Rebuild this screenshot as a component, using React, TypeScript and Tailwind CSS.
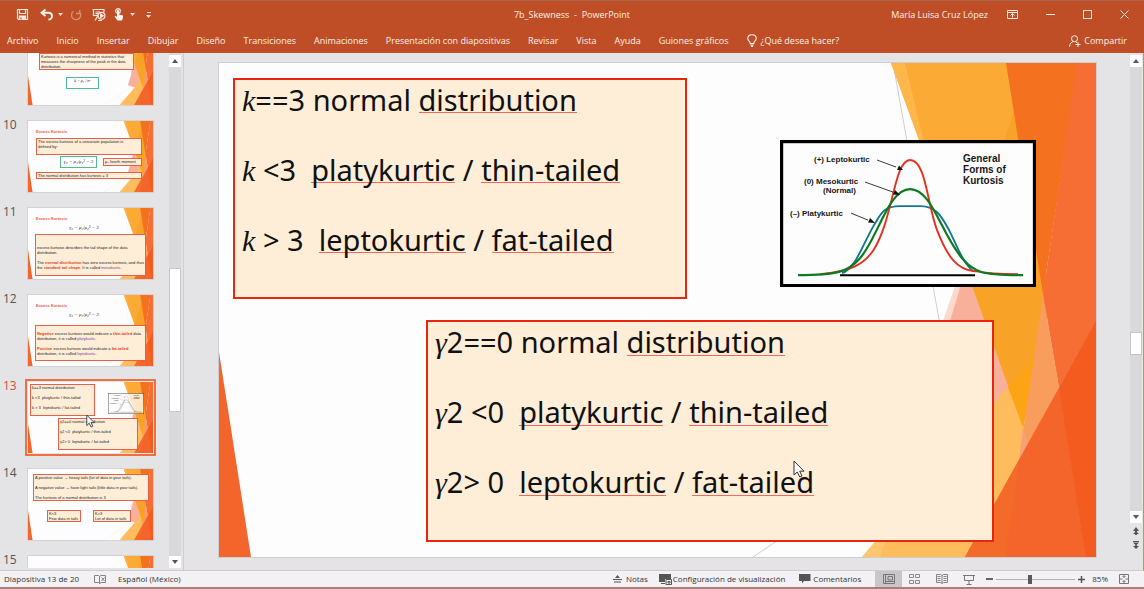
import React from "react";
import type { ReactNode } from "react";

const MENU = [
  "Archivo",
  "Inicio",
  "Insertar",
  "Dibujar",
  "Diseño",
  "Transiciones",
  "Animaciones",
  "Presentación con diapositivas",
  "Revisar",
  "Vista",
  "Ayuda",
  "Guiones gráficos",
];

function Backdrop() {
  return (
    <svg
      className="absolute inset-0 h-full w-full"
      viewBox="219 63 877 494"
      preserveAspectRatio="none"
      aria-hidden="true"
    >
      <rect x="219" y="63" width="877" height="494" fill="#fefdfe" />
      <path d="M893 63L940 325M753 557L1000 392" stroke="#cfcdd0" strokeWidth="1" fill="none" />
      <path d="M1000 200L957 280L940 330L1010 420L1040 300Z" fill="#fbd9cf" />
      <path d="M966 268L920 420L990 440L1023 427Z" fill="#f9b09a" />
      <path d="M862 557L1040 350L1060 400L1000 557Z" fill="#ffbc5c" />
      <path d="M862 557L900 513L890 530L880 557Z" fill="#ffc56f" />
      <path d="M891 63H1010L1050 300L1023 427Z" fill="#fbaa35" />
      <path d="M891 63H905L930 168Z" fill="#ffb64a" />
      <path d="M1014 110L966 268L1023 427L1050 300Z" fill="#f8a228" />
      <path d="M1008 387L1036 356L1023 427Z" fill="#fda414" />
      <path d="M1043 294L1059 388L1019 461Z" fill="#f99d5d" />
      <path d="M1023 427L1019 461L1028 444Z" fill="#f8a177" />
      <path d="M1006 63H1078L1043 294Z" fill="#f47120" />
      <path d="M1077 63H1096V322L1059 388L1043 294Z" fill="#f66e34" />
      <path d="M1096 321V557H965Z" fill="#f4652b" />
      <path d="M1019 460L1005 557H965Z" fill="#f46b29" />
      <path d="M1096 321V557H1086L1059 388Z" fill="#f45b1e" />
      <path d="M219 352L251 557H219Z" fill="#f4652b" />
    </svg>
  );
}

function Chart() {
  return (
    <svg
      className="block h-full w-full"
      viewBox="780 140 256 147"
      preserveAspectRatio="none"
      role="img"
      aria-label="General Forms of Kurtosis"
    >
      <rect x="781.5" y="141.5" width="253" height="144" fill="#fefdfe" stroke="#000" strokeWidth="3.4" />
      <path d="M840 275H975" stroke="#000" strokeWidth="2" />
      <g fill="none" strokeWidth="1.9">
        <path
          stroke="#12788c"
          d="M842 273C856 268 862 245 874 225C881 213 884 206 900 206H920C936 206 941 216 948 228C956 243 962 262 973 271"
        />
        <path
          stroke="#e6301f"
          d="M820 274C850 271 864 265 874 249C893 219 894 160 910 160C926 160 927 204 937 230C947 256 957 270 975 271C990 274 1005 274 1018 274"
        />
        <path
          stroke="#0d7a22"
          strokeWidth="2.200"
          d="M798 275C836 275 848 272 860 258C878 238 888 189 910 189C932 189 941 234 962 258C975 272 980 275 1023 275"
        />
      </g>
      <path d="M877 160L896 167M865 182L893 192M851 213L868 220" stroke="#222" strokeWidth="0.9" />
      <path d="M903 170L897 170L899 165.500ZM900 195L893 194.500L895 190ZM875 223L868 222.500L870 218Z" fill="#111" />
      <g fontFamily='"Liberation Sans", Arial, sans-serif' fontWeight="700" fill="#161616">
        <g fontSize="8">
          <text x="814" y="162">(+)  Leptokurtic</text>
          <text x="804" y="184">(0)  Mesokurtic</text>
          <text x="823" y="193">(Normal)</text>
          <text x="790" y="216">(–)  Platykurtic</text>
        </g>
        <g fontSize="10">
          <text x="963" y="162">General</text>
          <text x="963" y="173">Forms of</text>
          <text x="963" y="184">Kurtosis</text>
        </g>
      </g>
    </svg>
  );
}

function Cursor() {
  return (
    <svg className="block h-[18px] w-[12px]" viewBox="0 0 12 18" aria-hidden="true">
      <path d="M1 1V15L4.300 12L6.800 17L9 16L6.700 11.200H11Z" fill="#fff" stroke="#333" strokeWidth="1" />
    </svg>
  );
}

function Miss({ children }: { children: ReactNode }) {
  return (
    <span className="bg-[linear-gradient(#f26a5c,#f26a5c)] bg-[length:100%_1px] bg-[position:0_86%] bg-no-repeat">
      {children}
    </span>
  );
}

function Sym({ children }: { children: ReactNode }) {
  return <i className="font-['Liberation_Serif',serif] text-[30px] leading-[0px]">{children}</i>;
}

function SlideBox({ symbol, lines, className }: { symbol: string; lines: string[]; className: string }) {
  return (
    <div
      className={
        "absolute flex flex-col gap-[30px] border-2 border-[#e8250f] bg-[#feeed8] pl-[7px] text-[29px] leading-[40px] whitespace-pre text-[#111] " +
        className
      }
    >
      <p>
        <Sym>{symbol}</Sym>
        {lines[0]} normal <Miss>distribution</Miss>
      </p>
      <p>
        <Sym>{symbol}</Sym>
        {lines[1]}
        {"  "}
        <Miss>platykurtic</Miss> / <Miss>thin-tailed</Miss>
      </p>
      <p>
        <Sym>{symbol}</Sym>
        {lines[2]}
        {"  "}
        <Miss>leptokurtic</Miss> / <Miss>fat-tailed</Miss>
      </p>
    </div>
  );
}

function Thumb({ n, children, selected }: { n?: number; children?: ReactNode; selected?: boolean }) {
  return (
    <button className="flex h-[87px] w-full shrink-0 items-start text-left">
      <span
        className={
          "w-[25px] pl-[3px] text-[12px] leading-[8px] " + (selected ? "text-[#d0503a]" : "text-[#555]")
        }
      >
        {n}
      </span>
      <span
        className={
          "relative ml-[3px] block h-[71px] w-[125px] overflow-hidden bg-white font-['Liberation_Sans',sans-serif] text-[4px] leading-[5px] text-[#222] " +
          (selected ? "outline-2 outline-offset-1 outline-[#f2703f]" : "outline-1 outline-[#d4d2d4]")
        }
      >
        <Backdrop />
        {children}
      </span>
    </button>
  );
}

function Note({ className, children }: { className: string; children?: ReactNode }) {
  return (
    <span className={"absolute block overflow-hidden border border-[#e8604a] bg-[#feeed8] px-px " + className}>
      {children}
    </span>
  );
}

function Title() {
  return <b className="absolute top-[8px] left-[8px] text-[#ee5a3c]">Excess Kurtosis</b>;
}

function Formula({ className }: { className: string }) {
  return (
    <span className={"absolute block text-center font-['Liberation_Serif',serif] text-[5px] italic " + className}>
      γ₂ = μ₄/μ₂² − 3
    </span>
  );
}

function MiniLines({ symbol, lines }: { symbol: string; lines: string[] }) {
  return (
    <span className="flex flex-col gap-[5px] whitespace-pre">
      <span>{symbol + lines[0]} normal distribution</span>
      <span>{symbol + lines[1]}  platykurtic / thin-tailed</span>
      <span>{symbol + lines[2]}  leptokurtic / fat-tailed</span>
    </span>
  );
}

const K_LINES = ["==3", " <3", " > 3"];
const G_LINES = ["2==0", "2 <0", "2> 0"];

function Arrow({ down, label }: { down?: boolean; label: string }) {
  return (
    <button aria-label={label} className="flex h-[12px] w-full shrink-0 items-center justify-center bg-white">
      <svg className="h-[4px] w-[6px]" viewBox="0 0 6 4" aria-hidden="true">
        <path d={down ? "M0 0H6L3 4Z" : "M0 4H6L3 0Z"} fill="#555" />
      </svg>
    </button>
  );
}

function IconButton({ label, className, children }: { label: string; className?: string; children: ReactNode }) {
  return (
    <button aria-label={label} className={"flex items-center justify-center " + (className ?? "")}>
      {children}
    </button>
  );
}

function Caret() {
  return (
    <svg className="h-[3px] w-[5px]" viewBox="0 0 5 3" aria-hidden="true">
      <path d="M0 0H5L2.500 3Z" fill="#f8ddd2" />
    </svg>
  );
}

function TitleBar() {
  return (
    <div className="grid h-[27px] grid-cols-[1fr_auto_1fr] items-center text-[9px]">
      <div className="flex items-center pl-[16px]">
        <IconButton label="Guardar">
          <svg className="size-[13px]" viewBox="0 0 13 13" fill="none" stroke="#fbe9e1" strokeWidth="1.2" aria-hidden="true">
            <path d="M1.500 1.500H11.500V11.500H2.500L1.500 10.500ZM3.500 1.500V5.500H9.500V1.500" />
            <path d="M3.500 8H9.500V11.500H3.500Z" fill="#fbe9e1" />
            <path d="M5 9.500V11.500" stroke="#bf4e26" />
          </svg>
        </IconButton>
        <IconButton label="Deshacer" className="ml-[11px] gap-[5px]">
          <svg className="h-[13px] w-[13px]" viewBox="0 0 13 13" fill="none" stroke="#fff4ee" strokeWidth="1.900" aria-hidden="true">
            <path d="M5.500 1.500L1.500 4.700L5.500 8M2 4.700H8.500C11 4.700 12 6.300 12 8C12 10 10.500 11.500 8.500 11.500" />
          </svg>
          <Caret />
        </IconButton>
        <IconButton label="Rehacer" className="ml-[7px]">
          <svg className="size-[12px]" viewBox="0 0 12 12" fill="none" stroke="#d98f73" strokeWidth="1.300" aria-hidden="true">
            <path d="M3.500 2.300A4.600 4.600 0 1 0 9 2.500M6 4.500H9.800V0.800" />
          </svg>
        </IconButton>
        <IconButton label="Presentación desde el principio" className="ml-[10px]">
          <svg className="size-[14px]" viewBox="0 0 14 14" fill="none" stroke="#fbe9e1" strokeWidth="1.200" aria-hidden="true">
            <path d="M0.500 1.500H12.500M1.500 1.500V7.500H6M12 1.500V4M3.500 4H8M3.500 5.700H6M6 7.500L3 12.500M6 12.500H10" />
            <circle cx="9.500" cy="7.700" r="3.400" />
            <path d="M8.700 6L11.200 7.700L8.700 9.400Z" fill="#fbe9e1" />
          </svg>
        </IconButton>
        <IconButton label="Modo mouse o táctil" className="ml-[8px] gap-[6px]">
          <svg className="h-[13px] w-[10px]" viewBox="0 0 10 13" aria-hidden="true">
            <circle cx="4" cy="3" r="2.300" fill="none" stroke="#fbe9e1" strokeWidth="1.200" />
            <path d="M3 2.500C3 1.500 5 1.500 5 2.500V6.500L9 7.500V9.500L8 12.500H3.500L0.500 8.500C1 7.500 2 7.800 3 8.800Z" fill="#fff4ee" />
          </svg>
          <Caret />
        </IconButton>
        <IconButton label="Personalizar barra de acceso rápido" className="ml-[11px] flex-col gap-[2px]">
          <span className="block h-px w-[4px] bg-[#f8ddd2]" />
          <Caret />
        </IconButton>
      </div>
      <h1 className="whitespace-pre">7b_Skewness  -  PowerPoint</h1>
      <div className="flex items-center justify-end pr-[15px]">
        <span className="mr-[19px]">María Luisa Cruz López</span>
        <IconButton label="Opciones de la cinta" className="mr-[28px]">
          <svg className="h-[9px] w-[11px]" viewBox="0 0 11 9" fill="none" stroke="#fbe9e1" aria-hidden="true">
            <path d="M0.500 0.500H10.500V8.500H0.500ZM0.500 2.500H10.500M5.500 7.500V4M3.500 5.500L5.500 3.500L7.500 5.500" />
          </svg>
        </IconButton>
        <IconButton label="Minimizar" className="mr-[28px]">
          <span className="block h-px w-[9px] bg-[#fbe9e1]" />
        </IconButton>
        <IconButton label="Maximizar" className="mr-[28px]">
          <span className="block size-[9px] border border-[#fbe9e1]" />
        </IconButton>
        <IconButton label="Cerrar">
          <svg className="size-[9px]" viewBox="0 0 9 9" stroke="#fbe9e1" aria-hidden="true">
            <path d="M0.500 0.500L8.500 8.500M8.500 0.500L0.500 8.500" />
          </svg>
        </IconButton>
      </div>
    </div>
  );
}

function Ribbon() {
  return (
    <nav className="flex h-[25px] items-center gap-[18px] pr-[17px] pl-[7px] text-[9px] whitespace-nowrap">
      {MENU.map((m) => (
        <button key={m}>{m}</button>
      ))}
      <button className="flex items-center gap-[4px]">
        <svg className="h-[13px] w-[10px]" viewBox="0 0 10 13" fill="none" stroke="#fff4ee" strokeWidth="1.100" aria-hidden="true">
          <path d="M3.200 9.500C3.200 7.500 0.800 6.800 0.800 4.400C0.800 2.200 2.700 0.700 5 0.700S9.200 2.200 9.200 4.400C9.200 6.800 6.800 7.500 6.800 9.500ZM3.200 11H6.800M4 12.400H6" />
        </svg>
        ¿Qué desea hacer?
      </button>
      <button className="ml-auto flex items-center gap-[3px]">
        <svg className="h-[12px] w-[12px]" viewBox="0 0 12 12" fill="none" stroke="#fff4ee" aria-hidden="true">
          <circle cx="5.500" cy="3.700" r="3" />
          <path d="M0.500 11.500C0.800 8.500 2.500 7 4.500 6.600M6.500 6.600L8 7.800M6.500 9.500H11.500M9 7V12" />
        </svg>
        Compartir
      </button>
    </nav>
  );
}

function Thumbnails() {
  return (
    <aside className="flex w-[184px] shrink-0 border-r border-[#cfcdcf] pb-[2px]">
      <div className="flex min-w-0 flex-1 flex-col overflow-hidden">
        <div className="flex h-[68px] shrink-0 flex-col justify-end overflow-hidden">
          <Thumb>
            <Note className="top-[19px] left-[11px] h-[17px] w-[95px]">
              Kurtosis is a numerical method in statistics that measures the sharpness of the peak in the data
              distribution.
            </Note>
            <span className="absolute top-[43px] left-[38px] block h-[12px] w-[33px] border border-[#4dbb96] bg-white text-center font-['Liberation_Serif',serif] italic">
              k = μ₄ / σ⁴
            </span>
          </Thumb>
        </div>
        <Thumb n={10}>
          <Title />
          <Note className="top-[17px] left-[8px] h-[17px] w-[106px]">
            The excess kurtosis of a univariate population is
            <br />
            defined by:
          </Note>
          <Formula className="top-[35px] left-[32px] h-[12px] w-[37px] border border-[#4dbb96] bg-white leading-[10px]" />
          <Note className="top-[37px] left-[75px] h-[8px] w-[39px] whitespace-nowrap">μ₄ fourth moment</Note>
          <Note className="top-[51px] left-[8px] h-[7px] w-[106px]">The normal distribution has kurtosis = 3</Note>
        </Thumb>
        <Thumb n={11}>
          <Title />
          <Formula className="top-[17px] left-[38px] w-[36px]" />
          <Note className="top-[26px] left-[7px] h-[42px] w-[111px] pt-[10px]">
            excess kurtosis describes the tail shape of the data
            <br />
            distribution.
            <br />
            <br />
            The <b className="text-[#e63b20]">normal distribution</b> has zero excess kurtosis, and thus
            <br />
            the <b className="text-[#e63b20]">standard tail shape</b>. It is called{" "}
            <span className="text-[#7040a0]">mesokurtic</span>.
          </Note>
        </Thumb>
        <Thumb n={12}>
          <Title />
          <Formula className="top-[17px] left-[38px] w-[36px]" />
          <Note className="top-[30px] left-[7px] h-[36px] w-[111px] pt-[5px]">
            <b className="text-[#e63b20]">Negative</b> excess kurtosis would indicate a{" "}
            <b className="text-[#e63b20]">thin-tailed</b> data
            <br />
            distribution, it is called <span className="text-[#7040a0]">platykurtic</span>.
            <br />
            <br />
            <b className="text-[#e63b20]">Positive</b> excess kurtosis would indicate a{" "}
            <b className="text-[#e63b20]">fat-tailed</b>
            <br />
            distribution, it is called <span className="text-[#7040a0]">leptokurtic</span>.
          </Note>
        </Thumb>
        <Thumb n={13} selected>
          <Note className="top-[2px] left-[2px] h-[32px] w-[65px]">
            <MiniLines symbol="k" lines={K_LINES} />
          </Note>
          <span className="absolute top-[11px] left-[80px] block h-[21px] w-[36px] opacity-75">
            <Chart />
          </span>
          <Note className="top-[36px] left-[30px] h-[32px] w-[80px]">
            <MiniLines symbol="γ" lines={G_LINES} />
          </Note>
          <span className="absolute top-[32px] left-[58px] block h-[14px] w-[9px]">
            <svg className="block h-full w-full" viewBox="0 0 12 18" aria-hidden="true">
              <path d="M1 1V15L4.300 12L6.800 17L9 16L6.700 11.200H11Z" fill="#fff" stroke="#333" strokeWidth="1.200" />
            </svg>
          </span>
        </Thumb>
        <Thumb n={14}>
          <Note className="top-[5px] left-[5px] h-[27px] w-[116px] whitespace-nowrap">
            <span className="flex flex-col gap-[5px]">
              <span>A positive value → heavy tails (lot of data in your tails).</span>
              <span>A negative value → have light tails (little data in your tails).</span>
              <span>The kurtosis of a normal distribution is 3</span>
            </span>
          </Note>
          <Note className="top-[41px] left-[19px] h-[12px] w-[34px]">
            K&lt;3
            <br />
            Few data in tails
          </Note>
          <Note className="top-[41px] left-[65px] h-[12px] w-[38px]">
            K&gt;3
            <br />
            Lot of data in tails
          </Note>
        </Thumb>
        <Thumb n={15} />
      </div>
      <div className="mr-[2px] flex w-[12px] shrink-0 flex-col bg-[#d9d8da] pt-[2px]">
        <Arrow label="Subir" />
        <div className="flex-[202]" />
        <div className="flex-[143] border border-[#c6c4c6] bg-white" />
        <div className="flex-[145]" />
        <Arrow down label="Bajar" />
      </div>
    </aside>
  );
}

function Workspace() {
  return (
    <main className="flex min-w-0 flex-1">
      <div className="flex min-w-0 flex-1 pt-[10px] pr-[34px] pb-[13px] pl-[35px]">
        <section className="relative flex-1 overflow-hidden font-['Noto_Sans',sans-serif] outline-1 outline-[#cfcdcf]">
          <Backdrop />
          <SlideBox symbol="k" lines={K_LINES} className="top-[3%] left-[1.6%] h-[44.8%] w-[51.8%]" />
          <div className="absolute top-[15.6%] left-[64%] h-[29.8%] w-[29.2%]">
            <Chart />
          </div>
          <SlideBox symbol="γ" lines={G_LINES} className="top-[52%] left-[23.6%] h-[45%] w-[64.8%]" />
          <div className="absolute top-[80.4%] left-[65.4%]">
            <Cursor />
          </div>
        </section>
      </div>
      <div className="mr-px flex w-[12px] shrink-0 flex-col pt-[2px] pb-[21px]">
        <Arrow label="Desplazar arriba" />
        <div className="flex-[267] bg-[#d9d8da]" />
        <div className="flex-[21] border border-[#c6c4c6] bg-white" />
        <div className="flex-[157] bg-[#d9d8da]" />
        <Arrow down label="Desplazar abajo" />
        <div className="flex flex-col items-center gap-[6px] pt-[4px]">
          <button aria-label="Diapositiva anterior">
            <svg className="block h-[8px] w-[6px]" viewBox="0 0 6 8" fill="#555" aria-hidden="true">
              <path d="M0 4L3 0L6 4ZM2 3H4V5H2ZM0 7L3 4L6 7ZM2 6H4V8H2Z" />
            </svg>
          </button>
          <button aria-label="Diapositiva siguiente">
            <svg className="block h-[8px] w-[6px]" viewBox="0 0 6 8" fill="#555" aria-hidden="true">
              <path d="M0 0H6V1H0ZM0 1.500L3 4.500L6 1.500ZM2 4H4V5H2ZM0 5L3 8L6 5Z" />
            </svg>
          </button>
        </div>
      </div>
    </main>
  );
}

function StatusBar() {
  return (
    <footer className="flex h-[18px] shrink-0 items-center border-b-2 border-b-[#a98078] bg-[#f3f1f3] pl-[4px] text-[8px] whitespace-nowrap text-[#333]">
      <span>Diapositiva 13 de 20</span>
      <svg className="ml-[15px] h-[9px] w-[12px]" viewBox="0 0 12 9" fill="none" stroke="#777" strokeWidth="0.900" aria-hidden="true">
        <path d="M5.500 1.500L4.500 0.500H0.500V7.500H4.500L5.500 8.500V1.500L7 0.500H11.500V7.500H7L5.500 8.500M7.500 2.500L10.500 6M10.500 2.500L7.500 6" />
      </svg>
      <button className="ml-[12px]">Español (México)</button>
      <div className="ml-auto flex h-full items-center">
        <button className="flex items-center gap-[4px]">
          <svg className="h-[8px] w-[9px]" viewBox="0 0 9 8" fill="#555" aria-hidden="true">
            <path d="M2 3L4.500 0L7 3ZM0 4H9V5H0ZM1 6.500H8V7.500H1Z" />
          </svg>
          Notas
        </button>
        <button className="ml-[11px] flex items-center gap-[1px]">
          <svg className="h-[11px] w-[13px]" viewBox="0 0 13 11" aria-hidden="true">
            <path d="M0 0H12V5H6V8H0ZM2 9H6V10H2Z" fill="#555" />
            <path d="M7 5.500H12.500V10.500H7ZM9 7.500H11V9H9Z" fill="none" stroke="#555" />
          </svg>
          Configuración de visualización
        </button>
        <button className="ml-[14px] flex items-center gap-[2px]">
          <svg className="h-[10px] w-[12px]" viewBox="0 0 12 10" aria-hidden="true">
            <path d="M0 0H11.500V7H5L3 9.500V7H0Z" fill="#555" />
          </svg>
          Comentarios
        </button>
        <IconButton label="Normal" className="ml-[14px] h-full w-[27px] bg-[#c8c6c8]">
          <svg className="h-[10px] w-[12px]" viewBox="0 0 12 10" fill="none" stroke="#777" aria-hidden="true">
            <path d="M0.500 0.500H11.500V9.500H0.500ZM2.500 0.500V9.500M5 2.500H9.500V6H5ZM3 7.500H11" />
          </svg>
        </IconButton>
        <IconButton label="Clasificador de diapositivas" className="ml-[7px]">
          <svg className="h-[10px] w-[11px]" viewBox="0 0 11 10" fill="none" stroke="#888" aria-hidden="true">
            <path d="M0.500 0.500H4.500V3.500H0.500ZM6.500 0.500H10.500V3.500H6.500ZM0.500 6.500H4.500V9.500H0.500ZM6.500 6.500H10.500V9.500H6.500Z" />
          </svg>
        </IconButton>
        <IconButton label="Vista de lectura" className="ml-[16px]">
          <svg className="h-[10px] w-[12px]" viewBox="0 0 12 10" fill="none" stroke="#777" strokeWidth="0.900" aria-hidden="true">
            <path d="M6 1.500L4.500 0.500H0.500V8.500H4.500L6 9.500L7.500 8.500H11.500V0.500H7.500L6 1.500V9.500M1.500 2.500H4.500M1.500 4.500H4.500M1.500 6.500H4.500M7.500 2.500H10.500M7.500 4.500H10.500M7.500 6.500H10.500" />
          </svg>
        </IconButton>
        <IconButton label="Presentación" className="ml-[15px]">
          <svg className="h-[11px] w-[12px]" viewBox="0 0 12 11" fill="none" stroke="#777" aria-hidden="true">
            <path d="M0 1.500H12M1.500 1.500V6.500H10.500V1.500M6 6.500V10M3.500 10.500H8.500" />
          </svg>
        </IconButton>
        <IconButton label="Alejar" className="ml-[11px]">
          <span className="block h-[2px] w-[7px] bg-[#666]" />
        </IconButton>
        <input
          type="range"
          aria-label="Zoom"
          min={0}
          max={100}
          defaultValue={42}
          className="mx-[3px] h-[11px] w-[79px] appearance-none bg-[linear-gradient(#b5b3b5,#b5b3b5)] bg-[length:100%_1px] bg-center bg-no-repeat [&::-webkit-slider-thumb]:h-[9px] [&::-webkit-slider-thumb]:w-[4px] [&::-webkit-slider-thumb]:appearance-none [&::-webkit-slider-thumb]:bg-[#5a5a5a]"
        />
        <IconButton label="Acercar">
          <svg className="size-[7px]" viewBox="0 0 7 7" stroke="#555" strokeWidth="1.500" aria-hidden="true">
            <path d="M0 3.500H7M3.500 0V7" />
          </svg>
        </IconButton>
        <button className="ml-[7px]">85%</button>
        <IconButton label="Ajustar a la ventana" className="mr-[15px] ml-[11px]">
          <svg className="size-[10px]" viewBox="0 0 10 10" fill="none" stroke="#777" aria-hidden="true">
            <path d="M0.500 0.500H9.500V9.500H0.500ZM5 1V3.500M5 6.500V9M1 5H3.500M6.500 5H9M3.500 2L5 3.500L6.500 2M3.500 8L5 6.500L6.500 8" />
          </svg>
        </IconButton>
      </div>
    </footer>
  );
}

export default function App() {
  return (
    <div className="flex h-screen flex-col overflow-hidden bg-[#e4e3e5] font-['Open_Sans',sans-serif]">
      <header className="shrink-0 border-t border-t-[#a8664f] bg-[#bf4e26] text-[#fdeee7]">
        <TitleBar />
        <Ribbon />
      </header>
      <div className="flex min-h-0 flex-1 border-r border-r-[#c98c78] border-b border-b-[#cfcdcf]">
        <Thumbnails />
        <Workspace />
      </div>
      <StatusBar />
    </div>
  );
}
